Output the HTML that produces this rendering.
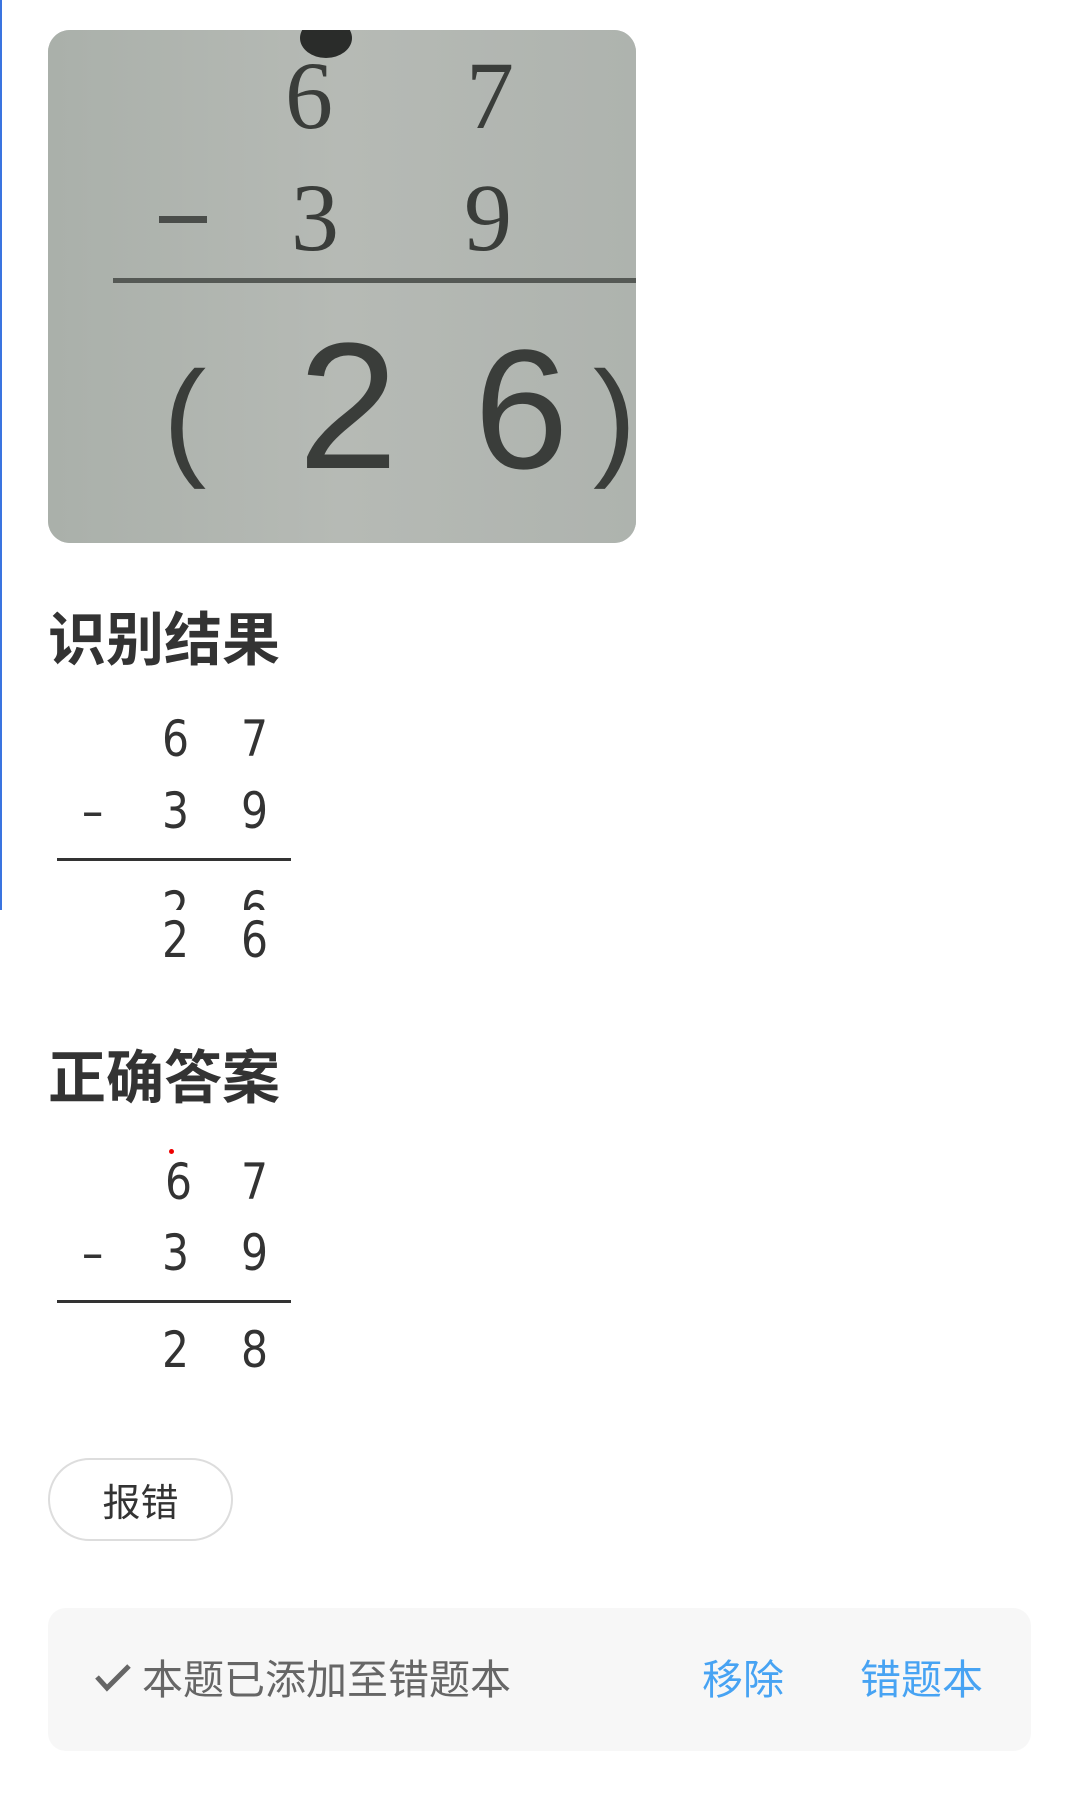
<!DOCTYPE html>
<html><head><meta charset="utf-8"><style>
*{margin:0;padding:0;box-sizing:border-box}
body{width:1080px;height:1812px;background:#fff;position:relative;overflow:hidden;font-family:"Liberation Sans","Noto Sans CJK SC",sans-serif}
.a{position:absolute;white-space:nowrap}
.t{font-family:"Noto Sans CJK SC",sans-serif;font-weight:bold;font-size:58px;line-height:58px;color:#333;left:48px}
.d{font-size:50px;line-height:50px;color:#333;font-family:"DejaVu Sans","Liberation Sans",sans-serif;transform:scaleX(0.85);transform-origin:left}
.hl{position:absolute;left:57px;width:234px;height:3px;background:#333}
</style></head><body>
<div class="a" style="left:0;top:0;width:2px;height:910px;background:#3a74e0"></div>
<div class="a" style="left:48px;top:30px;width:588px;height:513px;border-radius:22px;overflow:hidden;background:#b0b5b0">
<svg width="588" height="513" viewBox="0 0 588 513">
<defs><linearGradient id="g" x1="0" x2="1"><stop offset="0" stop-color="#aab0aa"/><stop offset="0.5" stop-color="#b6bab5"/><stop offset="1" stop-color="#aeb3ae"/></linearGradient></defs>
<rect width="588" height="513" fill="url(#g)"/>
<ellipse cx="278" cy="8" rx="26" ry="20" fill="#2a2c2a"/>
<g font-family="Liberation Serif,serif" fill="#3a3d3a" font-size="96">
<text x="237" y="98">6</text><text x="418" y="98">7</text>
<text x="243" y="220">3</text><text x="416" y="220">9</text>
</g>
<rect x="111" y="186" width="48" height="7" fill="#4a4d4a"/>
<rect x="65" y="248" width="523" height="5" fill="#555955"/>
<g font-family="Liberation Sans,sans-serif" fill="#3a3d3a" font-weight="300">
<text x="115" y="432" font-size="130">(</text>
<text x="250" y="438" font-size="180">2</text>
<text x="426" y="438" font-size="170">6</text>
<text x="545" y="432" font-size="130">)</text>
</g>
</svg></div>
<div class="a t" style="top:606px">识别结果</div>
<div class="a d" style="left:162px;top:714px">6</div><div class="a d" style="left:241px;top:714px">7</div>
<div class="a d" style="left:82px;top:786px">–</div><div class="a d" style="left:162px;top:786px">3</div><div class="a d" style="left:241px;top:786px">9</div>
<div class="hl" style="top:858px"></div>
<div class="a" style="left:0;top:880px;width:400px;height:30px;overflow:hidden">
<div class="a d" style="left:162px;top:5px">2</div><div class="a d" style="left:241px;top:5px">6</div></div>
<div class="a d" style="left:162px;top:915px">2</div><div class="a d" style="left:241px;top:915px">6</div>
<div class="a t" style="top:1044px">正确答案</div>
<div class="a" style="left:169px;top:1149px;width:5px;height:5px;border-radius:50%;background:#e00"></div>
<div class="a d" style="left:165px;top:1157px">6</div><div class="a d" style="left:241px;top:1157px">7</div>
<div class="a d" style="left:82px;top:1228px">–</div><div class="a d" style="left:162px;top:1228px">3</div><div class="a d" style="left:241px;top:1228px">9</div>
<div class="hl" style="top:1300px"></div>
<div class="a d" style="left:162px;top:1325px">2</div><div class="a d" style="left:241px;top:1325px">8</div>
<div class="a" style="left:48px;top:1458px;width:185px;height:83px;border:2px solid #ddd;border-radius:42px;text-align:center;font-family:'Noto Sans CJK SC',sans-serif;font-size:38px;line-height:79px;color:#333">报错</div>
<div class="a" style="left:48px;top:1608px;width:983px;height:143px;border-radius:18px;background:#f7f7f7"></div>
<svg class="a" style="left:94px;top:1661px" width="38" height="32" viewBox="0 0 38 32"><path d="M3 16 L13 27 L35 5" fill="none" stroke="#666" stroke-width="5"/></svg>
<div class="a" style="left:142px;top:1654px;font-family:'Noto Sans CJK SC',sans-serif;font-size:41px;line-height:44px;color:#666">本题已添加至错题本</div>
<div class="a" style="left:702px;top:1654px;font-family:'Noto Sans CJK SC',sans-serif;font-size:41px;line-height:44px;color:#47a3f3">移除</div>
<div class="a" style="left:860px;top:1654px;font-family:'Noto Sans CJK SC',sans-serif;font-size:41px;line-height:44px;color:#47a3f3">错题本</div>
</body></html>
